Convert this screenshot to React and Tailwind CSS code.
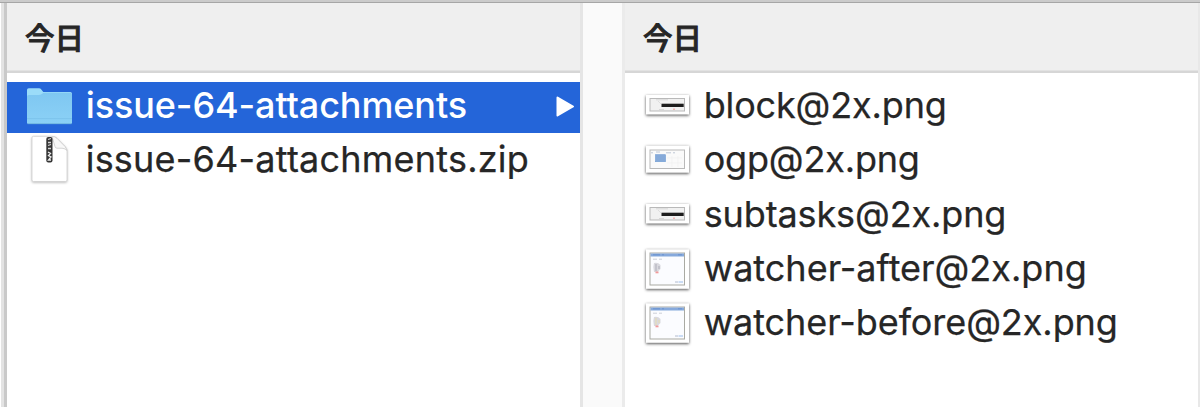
function FolderIcon() {
  return (
    <svg className="h-[54px] w-[52px] shrink-0" viewBox="0 0 52 54">
      <defs>
        <linearGradient id="folder" x1="0" y1="0" x2="0" y2="1">
          <stop offset="0" stopColor="#7fc7f1" />
          <stop offset="1" stopColor="#8bd1f6" />
        </linearGradient>
      </defs>
      <path d="M3 45V12Q3 10.300 4.700 10.300H15Q16.500 10.300 17.300 11.500L19.300 14H46.300Q48 14 48 15.700V45Z" fill="#9bdcf9" />
      <path d="M3 18.500Q3 17 4.700 17H14.500Q16.500 17 17.800 16Q19 14.800 21 14.800H46.300Q48 14.800 48 16.500V44.500Q48 46 46.300 46H4.700Q3 46 3 44.500Z" fill="url(#folder)" />
      <path d="M3 40.600H48" stroke="#79c0ea" strokeWidth="0.8" />
      <path d="M3.500 45.700H47.500" stroke="#68acd9" strokeWidth="0.8" />
    </svg>
  );
}

function ZipIcon() {
  return (
    <svg className="h-[54px] w-[52px] shrink-0 drop-shadow-[0_1px_1px_rgba(0,0,0,0.25)]" viewBox="0 0 52 54">
      <path d="M9.500 4.300H28Q31 4.300 33 6.300L41 14.500Q43 16.500 43 19V48Q43 49.500 41.500 49.500H9.500Q8 49.500 8 48V5.800Q8 4.300 9.500 4.300Z" fill="#fff" stroke="#cfcfcf" strokeWidth="0.8" />
      <path d="M28 4.500L31 14.500Q31.300 16.200 33 16.200H38Q41.500 16.500 43 18.500Q42.500 16.500 41 14.500L33 6.300Q31 4.300 28 4.500Z" fill="#f8f8f8" stroke="#cfcfcf" strokeWidth="0.9" />
      <rect x="22.300" y="5" width="6.200" height="25.500" rx="2" fill="#353535" />
      <path d="M24 7.500L27 6.500M24 10.500H27M24 13.500L27 12.500M24 16.500H27" stroke="#d5d5d5" strokeWidth="1.300" />
      <path d="M24 20L26.500 21.500L24.500 23.500L27 25L24.500 28H27" fill="none" stroke="#eee" strokeWidth="1.300" />
    </svg>
  );
}

function Frame({ top, height, children }) {
  return (
    <svg
      className="h-[54px] w-[52px] shrink-0 drop-shadow-[0_1px_1.5px_rgba(0,0,0,0.7)]"
      viewBox="0 0 52 54"
    >
      <rect x="4" y={top} width="43" height={height} fill="#fff" />
      {children}
    </svg>
  );
}

function BarThumb() {
  return (
    <Frame top={17} height={19.5}>
      <rect x="8" y="20.500" width="34.500" height="12.500" fill="#f1f1f1" stroke="#b9b9b9" />
      <path d="M14 21.800H26M17 31.500H22" stroke="#d2d2d2" strokeWidth="0.800" />
      <path d="M16 23L19 26" stroke="#ddd" />
      <rect x="19.500" y="25.700" width="22.200" height="3.300" fill="#1d1d1d" />
      <rect x="31" y="30.600" width="2" height="1.200" fill="#f3a7a7" />
    </Frame>
  );
}

function PageThumb() {
  return (
    <Frame top={13.7} height={27}>
      <rect x="8" y="18" width="34.500" height="18.500" fill="#fafafa" stroke="#b9b9b9" />
      <path d="M9 20.800H11M14 20H18M24 20.800H29M31 20.800H33" stroke="#b9c2d3" strokeWidth="0.900" />
      <path d="M25 26H40M25 31H40M30 24V35M36 24V35" stroke="#efefef" strokeWidth="0.700" />
      <rect x="13.500" y="22.700" width="10" height="7" fill="#86aad9" stroke="#6f9bd2" strokeWidth="0.600" />
    </Frame>
  );
}

function WindowThumb({ accent }) {
  return (
    <Frame top={8.3} height={39.5}>
      <rect x="8" y="12" width="34.500" height="32" fill="#fbfcff" stroke="#a9aaa3" />
      <rect x="8.500" y="12.500" width="33.500" height="3" fill="#86a9dc" />
      <path d="M11 13.800H18M20 13.800H22M36 13.800H40" stroke="#5f8acb" strokeWidth="0.700" />
      <path d="M11 18.200H15M17 18.200H20" stroke="#ccd0d8" />
      <path d="M12 22Q16 21 18.500 24V28L15.500 31H12Q10.500 26 12 22Z" fill="#d9d9df" />
      <path d="M14 23V30M17 25V28" stroke={accent} strokeWidth="1.200" />
      <rect x="13.500" y="30.500" width="3" height="1.800" fill="#f19a9a" />
      <path d="M33 41H36" stroke="#a9b4c8" strokeWidth="0.900" />
      <path d="M36.500 41H41" stroke="#8fb5e8" strokeWidth="0.900" />
    </Frame>
  );
}

function Row({ icon, name, selected, tracking }) {
  return (
    <li
      className={
        selected
          ? "mb-[3.330px] flex h-[51px] items-center bg-[#2465d9] pb-[5px] pl-[17px] font-medium text-white"
          : "mb-[3.330px] flex h-[51px] items-center pb-[5px] pl-[17px] text-[#262626] [-webkit-text-stroke:0.25px_#262626]"
      }
    >
      {icon}
      <span className={`ml-[9.700px] text-[36px] leading-[46px] whitespace-nowrap ${tracking}`}>{name}</span>
      {selected && (
        <svg className="mt-[2px] mr-[5px] ml-auto h-[21px] w-[19px]" viewBox="0 0 19 21">
          <path d="M1.500 1.500L17 10.500L1.500 19.500Z" fill="#fff" stroke="#fff" strokeWidth="2" strokeLinejoin="round" />
        </svg>
      )}
    </li>
  );
}

function Column({ children }) {
  return (
    <section className="w-[573px] shrink-0 bg-white">
      <h2 className="h-[70px] border-b-2 border-[#d6d6d6] bg-[#efefef] pl-[18px] font-['Noto_Sans_CJK_JP',sans-serif] text-[29.500px] leading-[66px] font-medium text-[#262626] shadow-[inset_0_-1px_0_#e2e2e2] [-webkit-text-stroke:0.9px_#262626]">
        今日
      </h2>
      <ul className="pt-[9px]">{children}</ul>
    </section>
  );
}

export default function App() {
  return (
    <main className="flex h-[407px] w-[1200px] flex-col overflow-hidden bg-white font-['Inter',sans-serif]">
      <div className="h-[3px] shrink-0 border-b border-[#a6a6a6] bg-[#cbcbcb]" />
      <div className="flex grow">
        <div className="ml-px w-[3px] shrink-0 bg-[#e3e3e3]" />
        <div className="w-[3px] shrink-0 bg-[#c9c9c9]" />
        <Column>
          <Row selected icon={<FolderIcon />} name="issue-64-attachments" tracking="tracking-[-0.100px]" />
          <Row icon={<ZipIcon />} name="issue-64-attachments.zip" tracking="tracking-[0.220px]" />
        </Column>
        <div className="w-[45px] shrink-0 border-x-[3px] border-r-[#ebebeb] border-l-[#e5e5e5] bg-[#fafafa]" />
        <Column>
          <Row icon={<BarThumb />} name="block@2x.png" tracking="tracking-[-0.150px]" />
          <Row icon={<PageThumb />} name="ogp@2x.png" tracking="tracking-[-0.180px]" />
          <Row icon={<BarThumb />} name="subtasks@2x.png" tracking="tracking-[-0.120px]" />
          <Row icon={<WindowThumb accent="#b5b5c0" />} name="watcher-after@2x.png" tracking="tracking-[0px]" />
          <Row icon={<WindowThumb accent="#e3dcb8" />} name="watcher-before@2x.png" tracking="tracking-[-0.070px]" />
        </Column>
        <div className="w-[2px] shrink-0 bg-[#e8e8e8]" />
      </div>
    </main>
  );
}
